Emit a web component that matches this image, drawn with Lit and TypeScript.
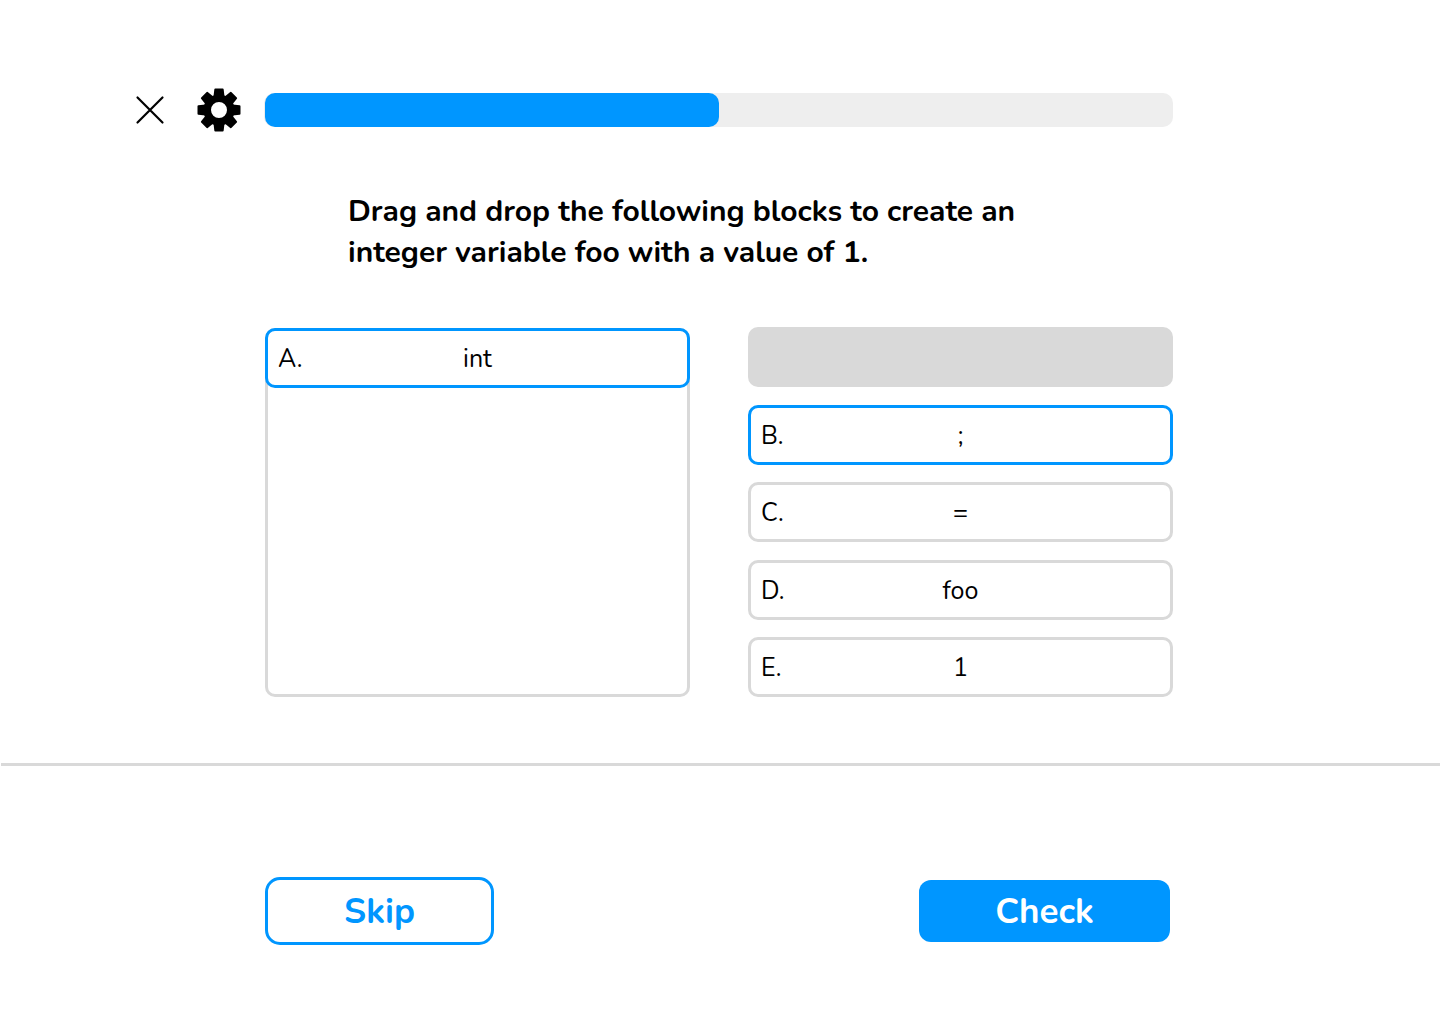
import { LitElement, html, css, svg } from "lit";
import { customElement, state } from "lit/decorators.js";
import { classMap } from "lit/directives/class-map.js";

interface Block {
  letter: string;
  code: string;
  placed: boolean;
  active: boolean;
}

const TEETH = [0, 45, 90, 135, 180, 225, 270, 315];

@customElement("app-root")
export class AppRoot extends LitElement {
  static styles = css`
    :host {
      display: block;
      background: #fff;
      color: #000;
      font-family: Nunito, "Noto Sans", "Open Sans", sans-serif;
    }
    * {
      box-sizing: border-box;
    }
    button {
      font: inherit;
      color: inherit;
      background: #fff;
      margin: 0;
      padding: 0;
      border: 0;
      cursor: pointer;
    }
    .top {
      display: flex;
      align-items: center;
      padding: 88px 267px 0 128px;
    }
    .icon {
      display: flex;
      flex: none;
      width: 44px;
      height: 44px;
    }
    .gear {
      margin: 0 23px 0 25px;
    }
    .track {
      flex: 1;
      height: 34px;
      padding-left: 1px;
      border-radius: 10px;
      background: #eee;
    }
    .fill {
      height: 100%;
      border-radius: 10px;
      background: #0096ff;
    }
    .question {
      max-width: 1048px;
      margin: 59px 0 0;
      padding: 0 20px 0 348px;
      font-size: 30px;
      line-height: 41px;
      font-weight: 700;
    }
    .board {
      display: grid;
      grid-template-columns: 1fr 1fr;
      gap: 58px;
      padding: 54px 267px 0 265px;
    }
    .answer {
      margin-top: 1px;
      border: 3px solid #d9d9d9;
      border-radius: 10px;
    }
    .answer .block {
      width: calc(100% + 6px);
      margin: -3px;
    }
    .choices {
      display: flex;
      flex-direction: column;
      justify-content: space-between;
      min-height: 370px;
    }
    .empty {
      height: 60px;
      border-radius: 10px;
      background: #d9d9d9;
    }
    .block {
      display: grid;
      grid-template-columns: 1fr auto 1fr;
      align-items: center;
      width: 100%;
      height: 60px;
      padding: 2px 10px 0;
      border: 3px solid #d9d9d9;
      border-radius: 10px;
      font-size: 25px;
      line-height: 34px;
      text-align: left;
    }
    .block.active {
      border-color: #0096ff;
    }
    .actions {
      display: flex;
      align-items: center;
      justify-content: space-between;
      margin: 66px 0 0 1px;
      padding: 111px 270px 78px 264px;
      border-top: 3px solid #d9d9d9;
    }
    .action {
      padding-top: 2px;
      font-size: 35px;
      line-height: 48px;
      font-weight: 700;
    }
    .skip {
      width: 229px;
      height: 68px;
      border: 3px solid #0096ff;
      border-radius: 15px;
      color: #0096ff;
    }
    .check {
      width: 251px;
      height: 62px;
      border-radius: 12px;
      background: #0096ff;
      color: #fff;
    }
  `;

  @state() private progress = 50;

  @state() private blocks: Block[] = [
    { letter: "A", code: "int", placed: true, active: true },
    { letter: "B", code: ";", placed: false, active: true },
    { letter: "C", code: "=", placed: false, active: false },
    { letter: "D", code: "foo", placed: false, active: false },
    { letter: "E", code: "1", placed: false, active: false },
  ];

  private toggle(block: Block) {
    this.blocks = this.blocks.map((b) =>
      b === block ? { ...b, placed: !b.placed, active: !b.placed } : b
    );
  }

  private renderBlock(block: Block) {
    return html`<button
      type="button"
      draggable="true"
      class=${classMap({ block: true, active: block.active })}
      @click=${() => this.toggle(block)}
    >
      <span>${block.letter}.</span><span>${block.code}</span>
    </button>`;
  }

  render() {
    return html`
      <header class="top">
        <button type="button" class="icon" aria-label="Close">
          <svg width="44" height="44" viewBox="0 0 44 44" aria-hidden="true">
            <path
              d="M9.5 9.5 34.5 34.5M34.5 9.5 9.5 34.5"
              fill="none"
              stroke="#000"
              stroke-width="2.2"
              stroke-linecap="round"
            />
          </svg>
        </button>
        <button type="button" class="icon gear" aria-label="Settings">
          <svg width="44" height="44" viewBox="-22 -22 44 44" aria-hidden="true">
            <circle r="11.8" fill="none" stroke="#000" stroke-width="7.6" />
            ${TEETH.map(
              (angle) => svg`<path
                d="M-4.5 -13.5 -3.7 -20.5H3.7L4.5 -13.5Z"
                transform="rotate(${angle})"
                stroke="#000"
                stroke-width="2"
                stroke-linejoin="round"
              />`
            )}
          </svg>
        </button>
        <div
          class="track"
          role="progressbar"
          aria-label="Lesson progress"
          aria-valuemin="0"
          aria-valuemax="100"
          aria-valuenow=${this.progress}
        >
          <div class="fill" style="width:${this.progress}%"></div>
        </div>
      </header>
      <main>
        <h1 class="question">
          Drag and drop the following blocks to create an integer variable foo
          with a value of 1.
        </h1>
        <div class="board">
          <section class="answer" aria-label="Your answer">
            ${this.blocks.filter((b) => b.placed).map((b) => this.renderBlock(b))}
          </section>
          <section class="choices" aria-label="Available blocks">
            ${this.blocks.map((b) =>
              b.placed ? html`<div class="empty"></div>` : this.renderBlock(b)
            )}
          </section>
        </div>
      </main>
      <footer class="actions">
        <button type="button" class="action skip">Skip</button>
        <button type="button" class="action check">Check</button>
      </footer>
    `;
  }
}
